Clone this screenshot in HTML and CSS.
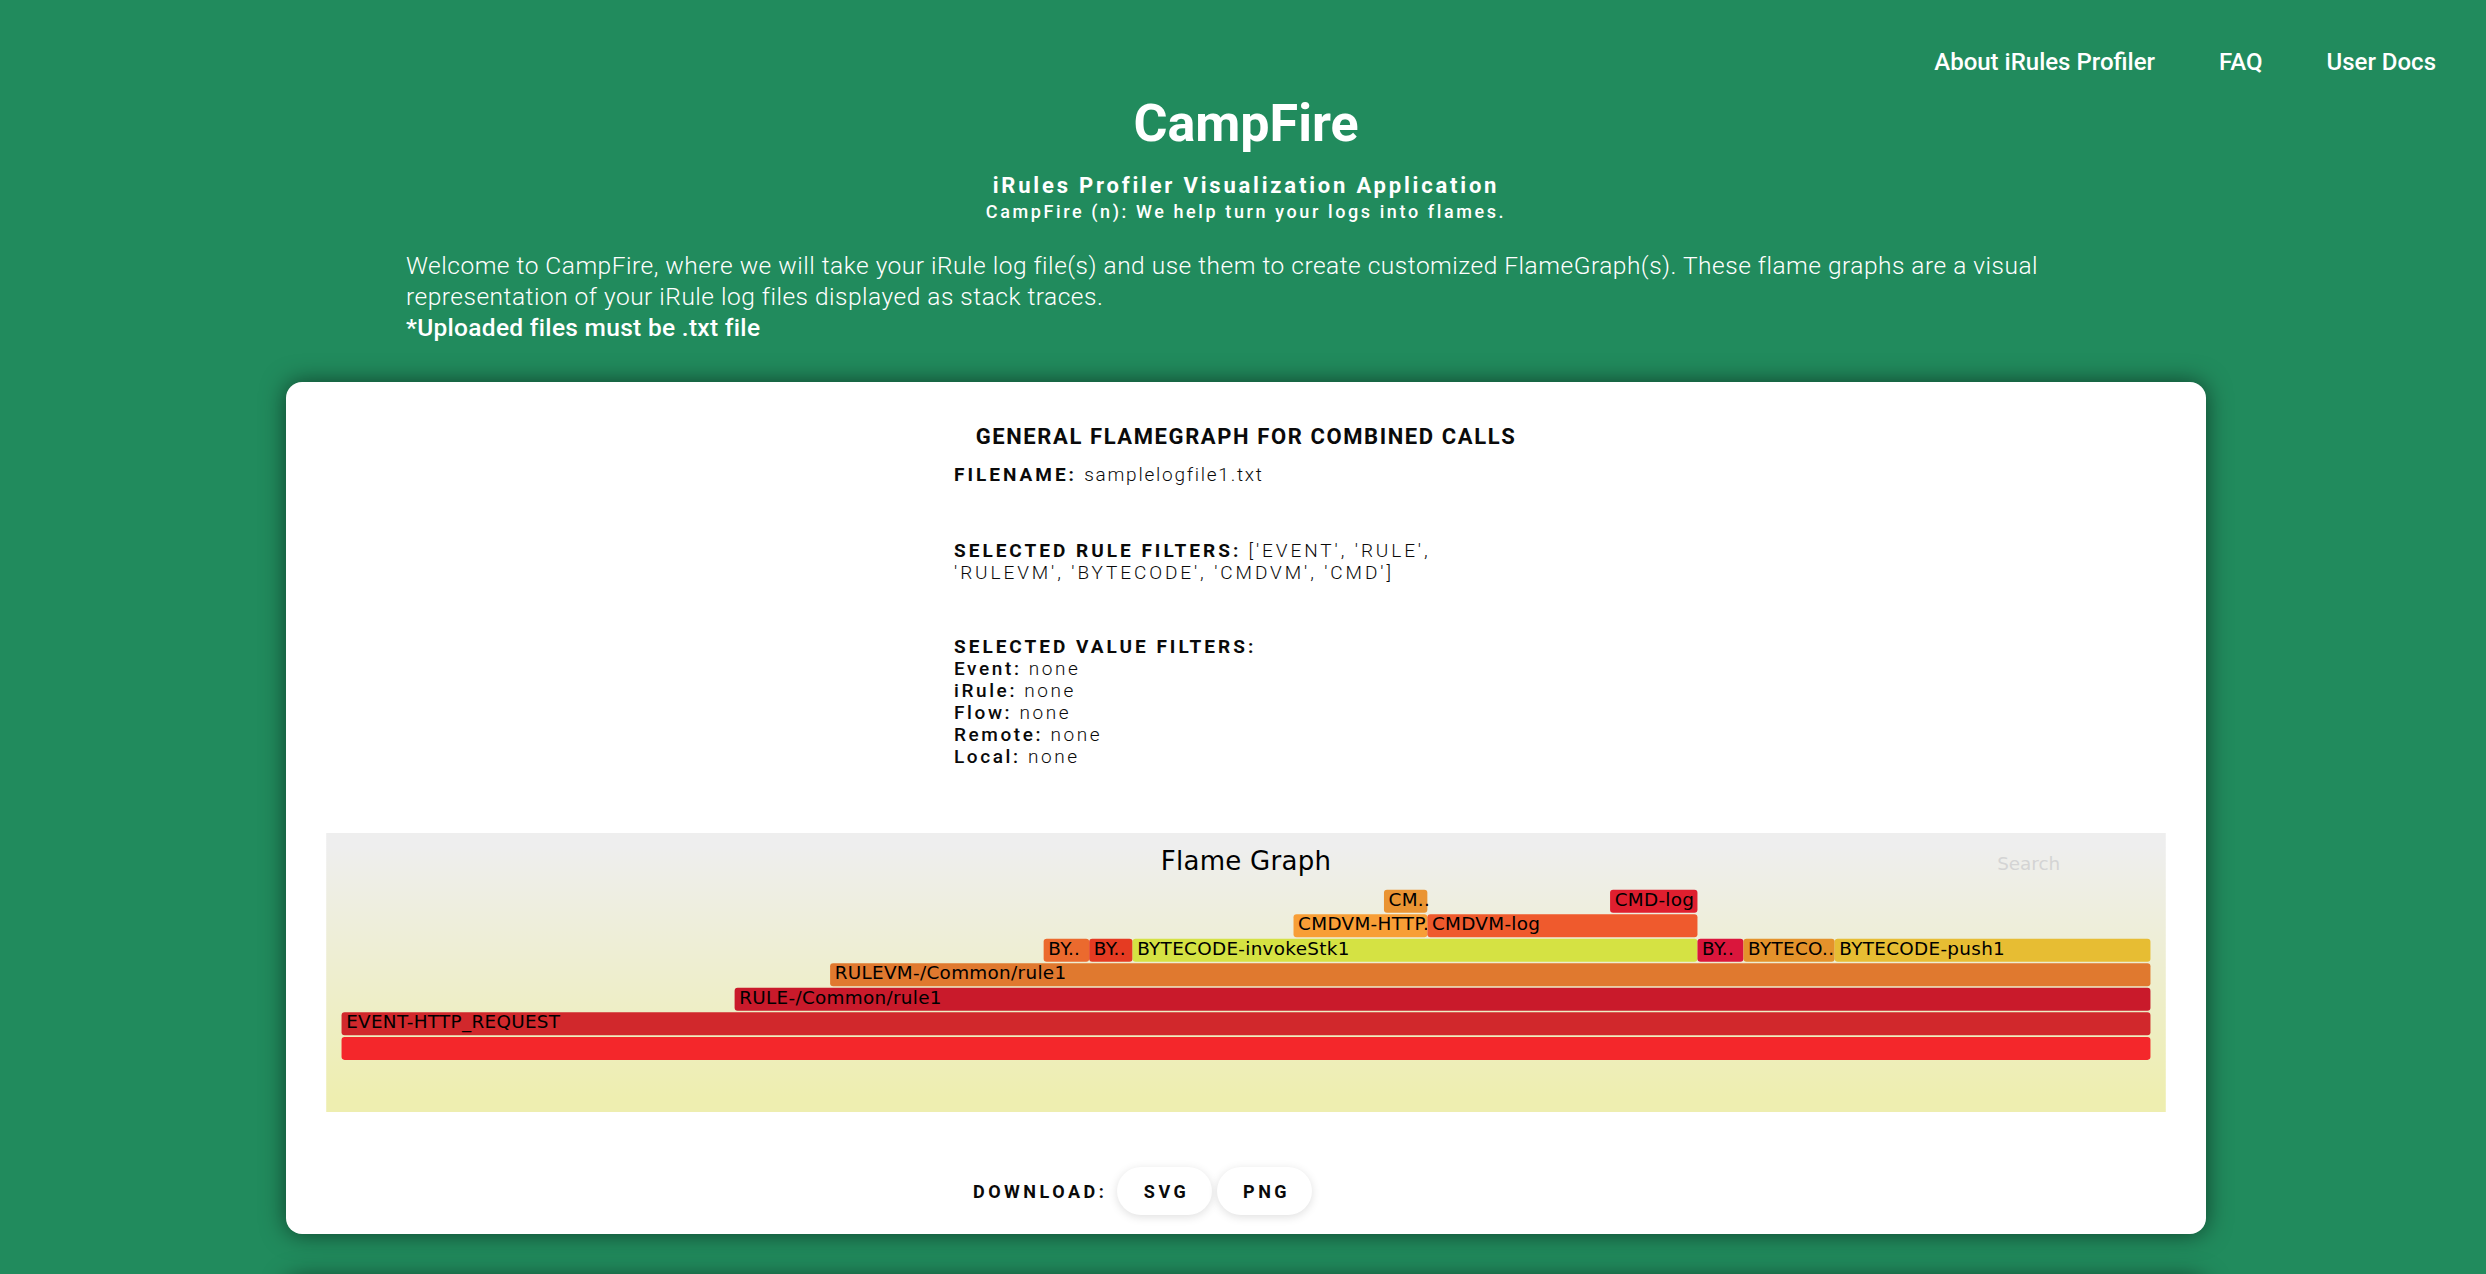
FILE: index.html
```html
<!DOCTYPE html>
<html lang="en">
<head>
<meta charset="utf-8">
<title>CampFire</title>
<link rel="stylesheet" href="styles.css">
</head>
<body>
<div class="page">
  <nav class="nav">
    <a href="#">About iRules Profiler</a>
    <a href="#">FAQ</a>
    <a href="#">User Docs</a>
  </nav>
  <header class="hero">
    <h1 class="brand">CampFire</h1>
    <h2 class="subtitle">iRules Profiler Visualization Application</h2>
    <p class="tagline">CampFire (n): We help turn your logs into flames.</p>
  </header>
  <section class="intro">
    <p>Welcome to CampFire, where we will take your iRule log file(s) and use them to create customized FlameGraph(s). These flame graphs are a visual representation of your iRule log files displayed as stack traces.</p>
    <p class="note">*Uploaded files must be .txt file</p>
  </section>
  <main class="card">
    <h3 class="card-title">GENERAL FLAMEGRAPH FOR COMBINED CALLS</h3>
    <div class="info">
      <p><b>FILENAME:</b> <span class="v-file">samplelogfile1.txt</span></p>
      <p class="block-rules"><b>SELECTED RULE FILTERS:</b> <span class="v-caps">['EVENT', 'RULE', 'RULEVM', 'BYTECODE', 'CMDVM', 'CMD']</span></p>
      <p class="block-values"><b>SELECTED VALUE FILTERS:</b><br>
        <span class="k">Event:</span> none<br>
        <span class="k">iRule:</span> none<br>
        <span class="k">Flow:</span> none<br>
        <span class="k">Remote:</span> none<br>
        <span class="k">Local:</span> none</p>
    </div>
    <svg class="flame" viewBox="0 0 1200 182" width="1840" height="279" xmlns="http://www.w3.org/2000/svg">
      <defs>
        <linearGradient id="fgbg" x1="0" y1="0" x2="0" y2="1">
          <stop offset="5%" stop-color="#eeeeee"/>
          <stop offset="95%" stop-color="#eeeeb0"/>
        </linearGradient>
      </defs>
      <rect x="0" y="0" width="1200" height="182" fill="url(#fgbg)"/>
      <text class="fg-title" x="600" y="24" text-anchor="middle">Flame Graph</text>
      <text class="fg-search" x="1090" y="24">Search</text>

      <g><rect class="fr" x="10" y="133" width="1180" height="15" rx="2" ry="2" fill="rgb(244,39,43)"/></g>
      <g><rect class="fr" x="10" y="117" width="1180" height="15" rx="2" ry="2" fill="rgb(209,40,44)"/><text class="fg-label" x="13" y="127.5">EVENT-HTTP_REQUEST</text></g>
      <g><rect class="fr" x="266.4" y="101" width="923.6" height="15" rx="2" ry="2" fill="rgb(201,26,43)"/><text class="fg-label" x="269.4" y="111.5">RULE-/Common/rule1</text></g>
      <g><rect class="fr" x="328.7" y="85" width="861.3" height="15" rx="2" ry="2" fill="rgb(224,121,47)"/><text class="fg-label" x="331.7" y="95.5">RULEVM-/Common/rule1</text></g>

      <g><rect class="fr" x="468" y="69" width="29.7" height="15" rx="2" ry="2" fill="rgb(235,106,46)"/><text class="fg-label" x="471" y="79.5">BY..</text></g>
      <g><rect class="fr" x="497.7" y="69" width="28.3" height="15" rx="2" ry="2" fill="rgb(229,59,34)"/><text class="fg-label" x="500.7" y="79.5">BY..</text></g>
      <g><rect class="fr" x="526" y="69" width="368.5" height="15" rx="2" ry="2" fill="rgb(213,226,67)"/><text class="fg-label" x="529" y="79.5">BYTECODE-invokeStk1</text></g>
      <g><rect class="fr" x="894.5" y="69" width="30" height="15" rx="2" ry="2" fill="rgb(218,22,60)"/><text class="fg-label" x="897.5" y="79.5">BY..</text></g>
      <g><rect class="fr" x="924.5" y="69" width="59.5" height="15" rx="2" ry="2" fill="rgb(228,146,43)"/><text class="fg-label" x="927.5" y="79.5">BYTECO..</text></g>
      <g><rect class="fr" x="984" y="69" width="206" height="15" rx="2" ry="2" fill="rgb(231,189,51)"/><text class="fg-label" x="987" y="79.5">BYTECODE-push1</text></g>

      <g><rect class="fr" x="631" y="53" width="87.3" height="15" rx="2" ry="2" fill="rgb(248,158,54)"/><text class="fg-label" x="634" y="63.5">CMDVM-HTTP..</text></g>
      <g><rect class="fr" x="718.3" y="53" width="176.2" height="15" rx="2" ry="2" fill="rgb(239,90,45)"/><text class="fg-label" x="721.3" y="63.5">CMDVM-log</text></g>

      <g><rect class="fr" x="690" y="37" width="28.3" height="15" rx="2" ry="2" fill="rgb(234,148,51)"/><text class="fg-label" x="693" y="47.5">CM..</text></g>
      <g><rect class="fr" x="837.5" y="37" width="57" height="15" rx="2" ry="2" fill="rgb(223,31,47)"/><text class="fg-label" x="840.5" y="47.5">CMD-log</text></g>
    </svg>
    <div class="download">
      <span class="download-label">DOWNLOAD:</span>
      <button class="btn" type="button">SVG</button>
      <button class="btn" type="button">PNG</button>
    </div>
  </main>
  <section class="card card-next"></section>
</div>
</body>
</html>
```
FILE: styles.css
```css
html, body {
  margin: 0;
  padding: 0;
}
body {
  background: #218b5d;
  font-family: Roboto, "Noto Sans", "Liberation Sans", sans-serif;
  color: #fff;
}
.page {
  padding-left: 6px;
}
.nav {
  display: flex;
  justify-content: flex-end;
  gap: 64px;
  padding: 48px 50px 0 0;
  font-size: 24px;
  line-height: 28px;
  font-weight: 500;
}
.nav a {
  color: #fff;
  text-decoration: none;
}
.hero {
  text-align: center;
}
.brand {
  margin: 18px 0 0;
  font-size: 52px;
  line-height: 60px;
  font-weight: 700;
}
.subtitle {
  margin: 18px 0 0;
  font-size: 22px;
  line-height: 27px;
  font-weight: 700;
  letter-spacing: 2.8px;
}
.tagline {
  margin: 0;
  font-size: 18px;
  line-height: 25px;
  font-weight: 500;
  letter-spacing: 2.6px;
}
.intro {
  width: 1680px;
  margin: 26px auto 0;
  font-size: 24.5px;
  line-height: 31px;
  font-weight: 300;
  letter-spacing: 0.5px;
}
.intro p {
  margin: 0;
}
.intro .note {
  font-weight: 500;
  letter-spacing: 0.3px;
}
.card {
  box-sizing: border-box;
  width: 1920px;
  margin: 39px auto 0;
  padding: 42px 40px 19px;
  background: #fff;
  border-radius: 16px;
  box-shadow: 0 0 24px rgba(0, 0, 0, 0.55);
  color: #0a0a0a;
}
.card-next {
  margin-top: 44px;
  height: 300px;
}
.card-title {
  margin: 0;
  text-align: center;
  font-size: 22px;
  line-height: 25px;
  font-weight: 700;
  letter-spacing: 1.6px;
}
.info {
  width: 540px;
  padding-right: 44px;
  margin: 15px auto 0;
  font-size: 19px;
  line-height: 22px;
  font-weight: 300;
  letter-spacing: 2.6px;
}
.info p {
  margin: 0;
}
.info b {
  font-weight: 700;
  letter-spacing: 3px;
}
.info .k {
  font-weight: 500;
}
.info .v-file {
  letter-spacing: 1.75px;
}
.info .v-caps {
  letter-spacing: 2.9px;
}
.info .block-rules {
  margin-top: 54px;
}
.info .block-values {
  margin-top: 52px;
}
.flame {
  display: block;
  margin-top: 65px;
  width: 1840px;
  height: 279px;
}
.fg-title {
  font-family: "DejaVu Sans", Verdana, sans-serif;
  font-size: 17px;
  letter-spacing: 0.15px;
  fill: #000;
}
.fg-search {
  font-family: "DejaVu Sans", Verdana, sans-serif;
  font-size: 12px;
  fill: #d4d4d4;
}
.fg-label {
  font-family: "DejaVu Sans", Verdana, sans-serif;
  font-size: 12px;
  letter-spacing: 0.2px;
  fill: #000;
}
.download {
  display: flex;
  align-items: center;
  margin: 55px 0 0 647px;
}
.download-label {
  font-size: 18px;
  font-weight: 700;
  letter-spacing: 3.5px;
  margin-right: 10px;
}
.btn {
  width: 95px;
  height: 48px;
  margin-right: 5px;
  padding: 0 0 0 3.5px;
  border: 0;
  border-radius: 24px;
  background: #fff;
  box-shadow: 0 2px 10px rgba(0, 0, 0, 0.13);
  font-family: Roboto, "Noto Sans", sans-serif;
  font-size: 18px;
  font-weight: 700;
  letter-spacing: 3.5px;
  color: #0a0a0a;
}
```
